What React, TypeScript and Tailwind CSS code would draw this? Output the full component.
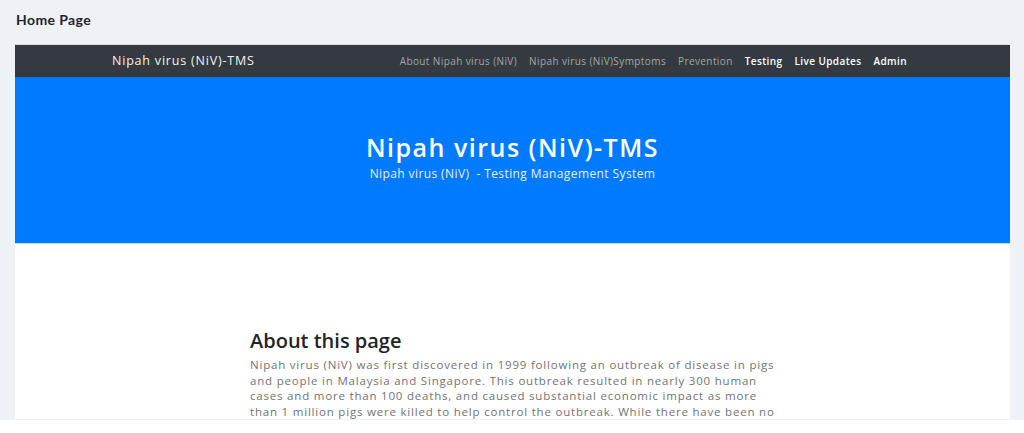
import React from "react";

const navLinks = [
  { label: "About Nipah virus (NiV)", active: false },
  { label: "Nipah virus (NiV)Symptoms", active: false },
  { label: "Prevention", active: false },
  { label: "Testing", active: true },
  { label: "Live Updates", active: true },
  { label: "Admin", active: true },
];

const aboutLines = [
  "Nipah virus (NiV) was first discovered in 1999 following an outbreak of disease in pigs",
  "and people in Malaysia and Singapore. This outbreak resulted in nearly 300 human",
  "cases and more than 100 deaths, and caused substantial economic impact as more",
  "than 1 million pigs were killed to help control the outbreak. While there have been no",
];

export default function App() {
  return (
    <div className="w-[1024px] h-[433px] overflow-hidden bg-white font-['Open_Sans',sans-serif]">
      <div className="h-[420px] bg-[#eef1f5] pl-[15px] pr-[14px] overflow-hidden">
        <div className="h-[44px] pt-[9px] pl-px text-[14px] font-bold tracking-[0.4px] text-[#1f2430] font-['Lato',sans-serif]">
          Home Page
        </div>

        {/* screenshot frame */}
        <div className="bg-white border-t border-[#d8dde3]">
          <nav className="h-[32px] bg-[#343a40] flex items-center justify-between pl-[97px] pr-[103px]">
            <span className="text-[12.5px] text-[#f2f2f2] tracking-[0.8px]">Nipah virus (NiV)-TMS</span>
            <div className="flex items-center gap-[12px]">
              {navLinks.map((link) => (
                <span
                  key={link.label}
                  className={
                    link.active
                      ? "text-[10px] font-semibold tracking-[0.4px] text-white"
                      : "text-[10px] tracking-[0.4px] text-[#a3a6a9]"
                  }
                >
                  {link.label}
                </span>
              ))}
            </div>
          </nav>

          <div className="h-[167px] bg-[#007bff] border-b border-[#b6def4] flex flex-col items-center pt-[55px]">
            <h1 className="text-[25px] leading-[30px] font-semibold tracking-[1.5px] text-white">
              Nipah virus (NiV)-TMS
            </h1>
            <p className="mt-[4px] text-[12px] leading-[16px] tracking-[0.4px] text-[#e6f0ff]">
              Nipah virus (NiV)&nbsp; - Testing Management System
            </p>
          </div>

          <div className="pl-[235px] pt-[84px]">
            <h2 className="text-[20px] leading-[26px] font-semibold text-[#212529]">About this page</h2>
            <p className="mt-[3px] text-[11.5px] leading-[15.6px] tracking-[0.8px] text-[#737373]">
              {aboutLines.map((line) => (
                <span key={line} className="block whitespace-nowrap">
                  {line}
                </span>
              ))}
            </p>
          </div>
        </div>
      </div>
    </div>
  );
}
